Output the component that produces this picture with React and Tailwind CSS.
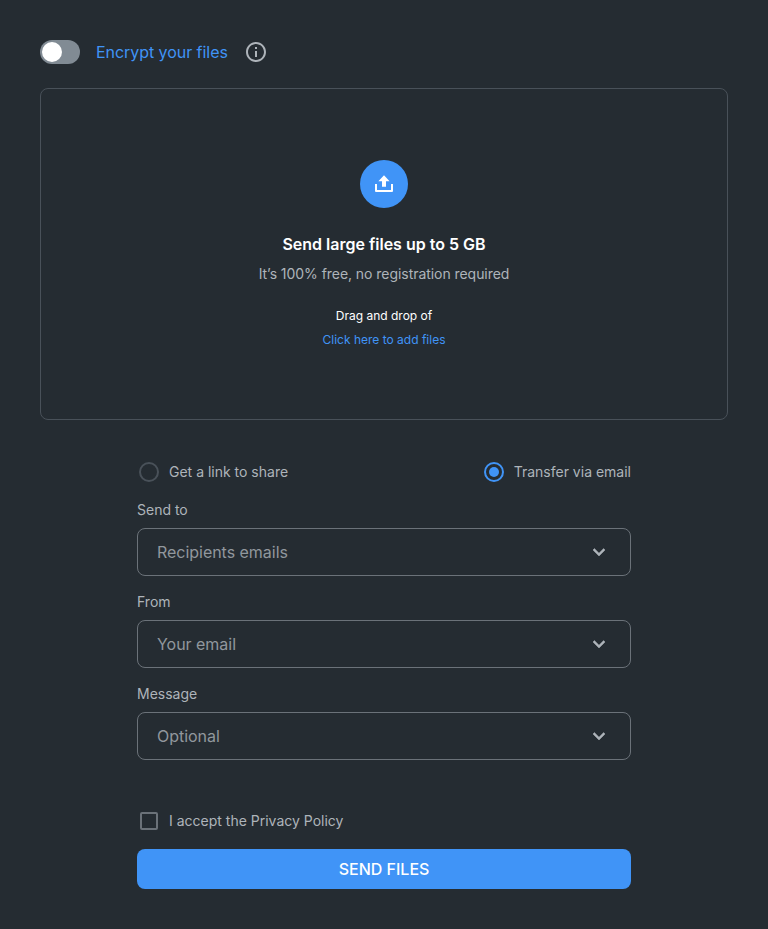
import { useState } from "react";

function InfoIcon() {
  return (
    <svg className="size-6" viewBox="0 0 24 24" fill="#aeb4ba">
      <path d="M11 7h2v2h-2zm0 4h2v6h-2zm1-9C6.480 2 2 6.480 2 12s4.480 10 10 10 10-4.480 10-10S17.520 2 12 2zm0 18c-4.410 0-8-3.590-8-8s3.590-8 8-8 8 3.590 8 8-3.590 8-8 8z" />
    </svg>
  );
}

function UploadIcon() {
  return (
    <svg className="size-6" viewBox="0 0 24 24" fill="white">
      <path d="M12 3.300l5.600 5.900H14v5.500h-4V9.200H6.400z" />
      <path d="M3 12h2v6h14v-6h2v7a1 1 0 0 1-1 1H4a1 1 0 0 1-1-1z" />
    </svg>
  );
}

function ChevronIcon() {
  return (
    <svg className="size-6" viewBox="0 0 24 24" fill="#aeb4ba" stroke="#aeb4ba" strokeWidth="0.500">
      <path d="M7.410 8.590L12 13.170l4.590-4.580L18 10l-6 6-6-6z" />
    </svg>
  );
}

function Radio({ label, checked, onSelect }) {
  return (
    <button type="button" role="radio" aria-checked={checked} onClick={onSelect} className="flex h-6 items-center gap-[10px]">
      <span className={`flex size-5 items-center justify-center rounded-full border-2 ${checked ? "border-[#4094f7]" : "border-[#495159]"}`}>
        {checked && <span className="size-[10px] rounded-full bg-[#4094f7]" />}
      </span>
      <span className="whitespace-nowrap text-sm leading-5">{label}</span>
    </button>
  );
}

function Field({ label, placeholder }) {
  return (
    <div className="flex flex-col gap-2">
      <span className="text-sm leading-5">{label}</span>
      <div className="flex h-12 items-center justify-between rounded-lg border border-[#6b7279] pr-[19px] pl-[19px]">
        <span className="text-base leading-6 tracking-[-0.03px] text-[#91979d]">{placeholder}</span>
        <ChevronIcon />
      </div>
    </div>
  );
}

export default function App() {
  const [method, setMethod] = useState("email");

  return (
    <main className="flex h-[929px] w-full flex-col bg-[#252c32] px-10 pt-10 font-['Inter',sans-serif] text-[#aeb4ba]">
      <header className="flex h-6 items-center">
        <div className="flex h-6 w-10 items-center rounded-full bg-[#818b94] pl-[2px]">
          <span className="size-5 rounded-full bg-white" />
        </div>
        <span className="mr-4 ml-4 whitespace-nowrap text-base leading-6 tracking-[-0.05px] text-[#4094f7]">Encrypt your files</span>
        <InfoIcon />
      </header>

      <section className="mt-6 flex h-[332px] flex-col items-center rounded-lg border border-[#495159] pt-[71px]">
        <div className="flex size-12 items-center justify-center rounded-full bg-[#4094f7]">
          <UploadIcon />
        </div>
        <h1 className="mt-6 text-base leading-6 font-semibold text-white">Send large files up to 5 GB</h1>
        <p className="mt-2 text-sm leading-5 tracking-[-0.05px]">It’s 100% free, no registration required</p>
        <p className="mt-6 text-xs leading-4 text-white">Drag and drop of</p>
        <button type="button" className="mt-2 text-xs leading-4 text-[#4094f7]">Click here to add files</button>
      </section>

      <form className="mx-auto mt-10 flex w-[494px] flex-col">
        <div className="flex justify-between pl-[2px]">
          <Radio label="Get a link to share" checked={method === "link"} onSelect={() => setMethod("link")} />
          <Radio label="Transfer via email" checked={method === "email"} onSelect={() => setMethod("email")} />
        </div>
        <div className="mt-4 flex flex-col gap-4">
          <Field label="Send to" placeholder="Recipients emails" />
          <Field label="From" placeholder="Your email" />
          <Field label="Message" placeholder="Optional" />
        </div>
        <label className="mt-[49px] flex h-6 items-center gap-[11px] pl-[3px]">
          <span className="size-[18px] rounded-[2px] border-2 border-[#6b7279]" />
          <span className="text-sm leading-5">I accept the Privacy Policy</span>
        </label>
        <button type="button" className="mt-4 h-10 rounded-lg bg-[#4094f7] text-base leading-6 font-medium text-white">
          SEND FILES
        </button>
      </form>
    </main>
  );
}
